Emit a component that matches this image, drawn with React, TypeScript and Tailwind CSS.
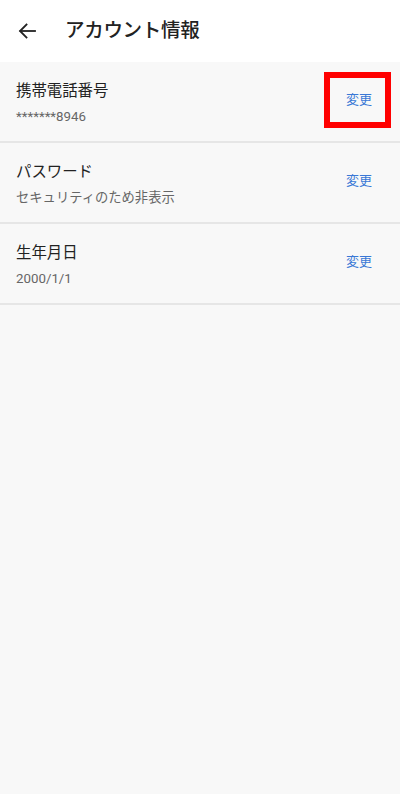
import React from "react";

const rows = [
  { title: "携帯電話番号", sub: "*******8946", highlight: true },
  { title: "パスワード", sub: "セキュリティのため非表示", highlight: false },
  { title: "生年月日", sub: "2000/1/1", highlight: false },
];

export default function App() {
  return (
    <div
      className="w-[400px] h-[794px] bg-[#f8f8f8] flex flex-col"
      style={{ fontFamily: 'Roboto, "Noto Sans CJK JP", "Noto Sans", sans-serif' }}
    >
      <div className="h-[62px] bg-white flex items-center shrink-0">
        <div className="w-[65px] flex items-center pl-[15px]">
          <svg width="24" height="24" viewBox="0 0 24 24" fill="none" stroke="#222" strokeWidth="1.8" strokeLinecap="square">
            <path d="M20 12H5.5" />
            <path d="M11.5 5.5L5 12l6.5 6.5" />
          </svg>
        </div>
        <div className="text-[19.5px] font-medium text-[#222] leading-none tracking-[-0.3px] mt-[-1px]">アカウント情報</div>
      </div>
      {rows.map((r) => (
        <div key={r.title} className="h-[81px] border-b-2 border-[#e6e6e6] flex items-center justify-between pl-4 pr-[9px]">
          <div className="flex flex-col mt-[3px]">
            <div className="text-[15.4px] leading-[22px] text-[#222]">{r.title}</div>
            <div className="text-[13.3px] leading-[18px] text-[#666] mt-[6px]">{r.sub}</div>
          </div>
          <div
            className={
              "w-[67px] h-[56px] flex items-center justify-center border-[6px] text-[13px] text-[#3a78d6] mt-[-3px] " +
              (r.highlight ? "border-[#ff0000]" : "border-transparent")
            }
          >
            <span className="ml-[3px]">変更</span>
          </div>
        </div>
      ))}
    </div>
  );
}
